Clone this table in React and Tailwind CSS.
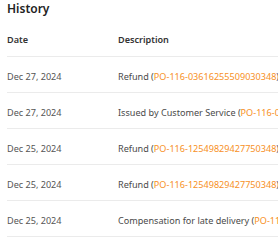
import React from 'react';

const rows = [
  { date: 'Dec 27, 2024', text: 'Refund', ref: 'PO-116-03616255509030348' },
  { date: 'Dec 27, 2024', text: 'Issued by Customer Service', ref: 'PO-116-03616255509030348' },
  { date: 'Dec 25, 2024', text: 'Refund', ref: 'PO-116-12549829427750348' },
  { date: 'Dec 25, 2024', text: 'Refund', ref: 'PO-116-12549829427750348' },
  { date: 'Dec 25, 2024', text: 'Compensation for late delivery', ref: 'PO-116-12549829427750348' },
];

export default function App() {
  return (
    <div
      className="w-[278px] h-[250px] overflow-hidden bg-white text-[#333]"
      style={{ fontFamily: '"Noto Sans", "Open Sans", sans-serif' }}
    >
      <div className="pl-[7px]">
        <h2 className="h-[20px] pt-[1px] text-[12px] leading-[16px] font-semibold text-[#222]">History</h2>
        <table className="w-[420px] border-collapse text-[9.1px] whitespace-nowrap">
          <thead>
            <tr className="border-b border-[#ebebeb]">
              <th className="w-[111px] h-[36px] pt-[4px] text-left font-semibold text-[#333] p-0">Date</th>
              <th className="text-left font-semibold text-[#333] p-0 pt-[4px]">Description</th>
            </tr>
          </thead>
          <tbody>
            {rows.map((r, i) => (
              <tr key={i} className="border-b border-[#ebebeb]">
                <td className="h-[36px] p-0 pt-[5px] text-[#555]">{r.date}</td>
                <td className="p-0 pt-[5px] text-[#4a4a4a]">
                  {r.text} (<span className="text-[#f7901e]">{r.ref}</span>)
                </td>
              </tr>
            ))}
          </tbody>
        </table>
      </div>
    </div>
  );
}
